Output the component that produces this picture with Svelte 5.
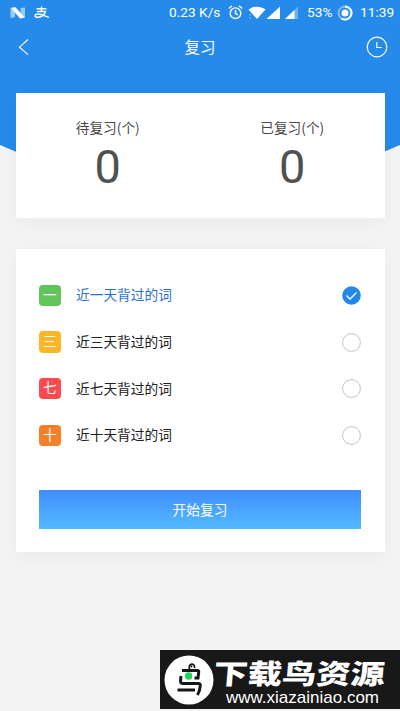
<script>
  const stats = [
    { label: '待复习(个)', value: 0 },
    { label: '已复习(个)', value: 0 },
  ];
  const options = [
    { mark: '一', label: '近一天背过的词', tone: 'green' },
    { mark: '三', label: '近三天背过的词', tone: 'yellow' },
    { mark: '七', label: '近七天背过的词', tone: 'red' },
    { mark: '十', label: '近十天背过的词', tone: 'orange' },
  ];
  let selected = $state(0);
</script>

<div class="screen">
  <div class="status">
    <svg class="n" width="16" height="12" viewBox="0 0 16 12">
      <path d="M.5 1.500 5 .5V10l-4.500 1zM10.500 1 15 .5v10l-4.500 1z" fill="#9dcbf8" />
      <path d="M1 .8 5.500.2 14.500 10.500 10 11.500z" fill="#fff" />
    </svg>
    <svg class="pay" width="17" height="13" viewBox="0 0 17 13" fill="none" stroke="#fff" stroke-width="1.400">
      <path d="M2.500 2.800h10M7.500.5v5M3 5.500h8.500C10.500 8.800 7.500 11 4 11.200 0 11.400.3 8 4 8c4 0 7 2.200 11 3.300" />
    </svg>
    <span class="speed">0.23 K/s</span>
    <svg class="alarm" width="15" height="15" viewBox="0 0 15 15" fill="none" stroke="#fff" stroke-width="1.400">
      <circle cx="7.500" cy="8.200" r="5.300" />
      <path d="M7.500 5v3.400l2.200 1.400M.8 3.500 4 .8M11 .8l3.200 2.700" />
    </svg>
    <svg class="net" width="52" height="14" viewBox="0 0 52 14">
      <path d="M.5 3.500C5.500-.2 12.500-.2 17.500 3.500L9 13z" fill="#fff" />
      <path d="M2 8v2M2 11v2" stroke="#8fc3f7" />
      <path d="M18.500 13 32 .5V13z" fill="#fff" />
      <path d="M37 13 50 .5V13z" fill="#6db0f3" />
      <path d="M37 13 46.500 4v9z" fill="#fff" />
    </svg>
    <span class="percent">53%</span>
    <svg class="battery" width="16" height="16" viewBox="0 0 16 16" fill="none">
      <circle cx="8" cy="8" r="6.500" stroke="#83bdf6" stroke-width="2" />
      <path d="M8 1.500a6.500 6.500 0 1 1-3.500 12" stroke="#fff" stroke-width="2" />
      <circle cx="8" cy="8" r="3.500" fill="#fff" />
    </svg>
    <span class="time">11:39</span>
  </div>

  <header>
    <svg width="22" height="22" viewBox="0 0 22 22" fill="none" stroke="#fff" stroke-width="1.100">
      <path d="M13 3.500 4.500 11.200 13 18.700" />
    </svg>
    <h1>复习</h1>
    <svg width="22" height="22" viewBox="0 0 22 22" fill="none" stroke="#fff" stroke-width="1.200">
      <circle cx="11" cy="11" r="9.800" />
      <path d="M10.800 6v5.500h5" />
    </svg>
  </header>

  <section class="card stats">
    {#each stats as s}
      <div class="stat">
        <span>{s.label}</span>
        <strong>{s.value}</strong>
      </div>
    {/each}
  </section>

  <section class="card list">
    {#each options as o, i}
      <button class="row" class:active={selected === i} onclick={() => (selected = i)}>
        <span class="mark {o.tone}">{o.mark}</span>
        <span class="label">{o.label}</span>
        <svg width="19" height="19" viewBox="0 0 19 19" fill="none">
          {#if selected === i}
            <circle cx="9.500" cy="9.500" r="9.300" fill="#2388e9" />
            <path d="m4.500 9.500 3.500 3.500 6.500-6.500" stroke="#fff" stroke-width="1.300" />
          {:else}
            <circle cx="9.500" cy="9.500" r="8.900" stroke="#bcbcbc" stroke-width=".9" />
          {/if}
        </svg>
      </button>
    {/each}
    <button class="start">开始复习</button>
  </section>

  <aside class="banner">
    <svg width="50" height="50" viewBox="0 0 50 50" fill="none">
      <circle cx="25" cy="25" r="24.500" fill="#fff" />
      <g stroke="#161616" stroke-width="3">
        <path d="M18 15.500h15.500q1.500 0 1.200 1.500l-.7 6h-3.500" />
        <path d="M17 21l-.5 5q0 2.500 2.500 2.500h15.500q2 0 1.800 2c-.3 4-1 6.500-2.800 9.500" />
        <path d="M13.500 35H31" />
        <path d="M25.500 14.500c-2-6.500 6-7 5-1.500" stroke-width="1.800" />
      </g>
      <circle cx="27.500" cy="11.500" r=".9" fill="#161616" />
      <circle cx="24.600" cy="21" r="3.700" fill="#20d45a" />
    </svg>
    <div class="brand">
      <b>下载鸟资源</b>
      <span>www.xiazainiao.com</span>
    </div>
  </aside>
</div>

<style>
  .screen {
    position: relative;
    box-sizing: border-box;
    width: 400px;
    height: 711px;
    overflow: hidden;
    display: flex;
    flex-direction: column;
    font-family: 'Noto Sans CJK SC', sans-serif;
    background: #f3f3f3;
    isolation: isolate;
  }
  .screen::before {
    content: '';
    position: absolute;
    z-index: -1;
    inset: 0 0 auto;
    height: 200px;
    background: #258aea;
    clip-path: polygon(0 0, 100% 0, 100% 145px, 380px 153.500px, 20px 153.500px, 0 145px);
  }
  .status {
    display: flex;
    align-items: center;
    height: 25px;
    padding-left: 10px;
    color: #fff;
    font: 13.700px/25px Roboto, sans-serif;
  }
  .status svg, .status span { flex: none; }
  .pay { margin-left: 8px; }
  .speed { width: 52px; margin-left: 118px; }
  .alarm { margin-left: 7px; }
  .net { margin-left: 5px; }
  .percent { width: 27px; margin-left: 7px; }
  .battery { margin-left: 3px; }
  .time { margin-left: 7px; }
  header {
    display: flex;
    align-items: center;
    justify-content: space-between;
    height: 44px;
    padding: 0 12px;
  }
  header svg:first-child { margin-left: 3px; margin-right: -3px; }
  h1 {
    margin: 0 0 2px;
    color: #fff;
    font-size: 15.500px;
    font-weight: 400;
  }
  .card {
    box-sizing: border-box;
    width: 369px;
    margin-left: 15.500px;
    background: #fff;
    box-shadow: 0 5px 16px rgba(0, 0, 0, .035);
  }
  .stats {
    display: flex;
    height: 125px;
    margin-top: 24px;
  }
  .stat {
    flex: 1;
    display: flex;
    flex-direction: column;
    align-items: center;
    padding-top: 24px;
    color: #484848;
    font-size: 13.700px;
    line-height: 20px;
  }
  .stat strong {
    margin-top: 1px;
    font: 400 47px/57px Roboto, sans-serif;
    color: #505050;
  }
  .list {
    height: 303px;
    margin-top: 31px;
    padding: 23px 23.500px 0;
  }
  button {
    border: 0;
    padding: 0;
    font-family: inherit;
  }
  .row {
    display: flex;
    align-items: center;
    width: 100%;
    height: 46.700px;
    background: none;
    color: #202020;
    font-size: 13.700px;
    text-align: left;
  }
  .row.active { color: #2b72d0; }
  .mark {
    width: 21.500px;
    height: 21.500px;
    border-radius: 4px;
    color: #fff;
    font-size: 13.700px;
    line-height: 19px;
    text-align: center;
  }
  .green { background: #60c65a; }
  .yellow { background: #fdb528; }
  .red { background: #fb4b50; }
  .orange { background: #f58029; }
  .label {
    flex: 1;
    margin-left: 15.500px;
    padding-bottom: 2px;
  }
  .start {
    display: block;
    width: 100%;
    height: 39px;
    margin-top: 31px;
    background: linear-gradient(#418dff, #52baff);
    color: #fff;
    font-size: 13.700px;
    line-height: 39px;
  }
  .banner {
    position: absolute;
    right: 0;
    bottom: 2px;
    box-sizing: border-box;
    display: flex;
    width: 240px;
    height: 59px;
    padding: 5px 0 0 4px;
    background: #181818;
    color: #fff;
  }
  .brand {
    display: flex;
    flex-direction: column;
    align-items: center;
    width: 172px;
    white-space: nowrap;
  }
  .brand b {
    font-size: 32px;
    font-weight: 900;
    line-height: 32px;
    transform: translate(-.5px, 1px) skewX(-5deg) scale(1.070, .86);
  }
  .brand span {
    margin-top: 1px;
    margin-left: 5px;
    font: 17px/20px 'Liberation Sans', sans-serif;
  }
</style>
